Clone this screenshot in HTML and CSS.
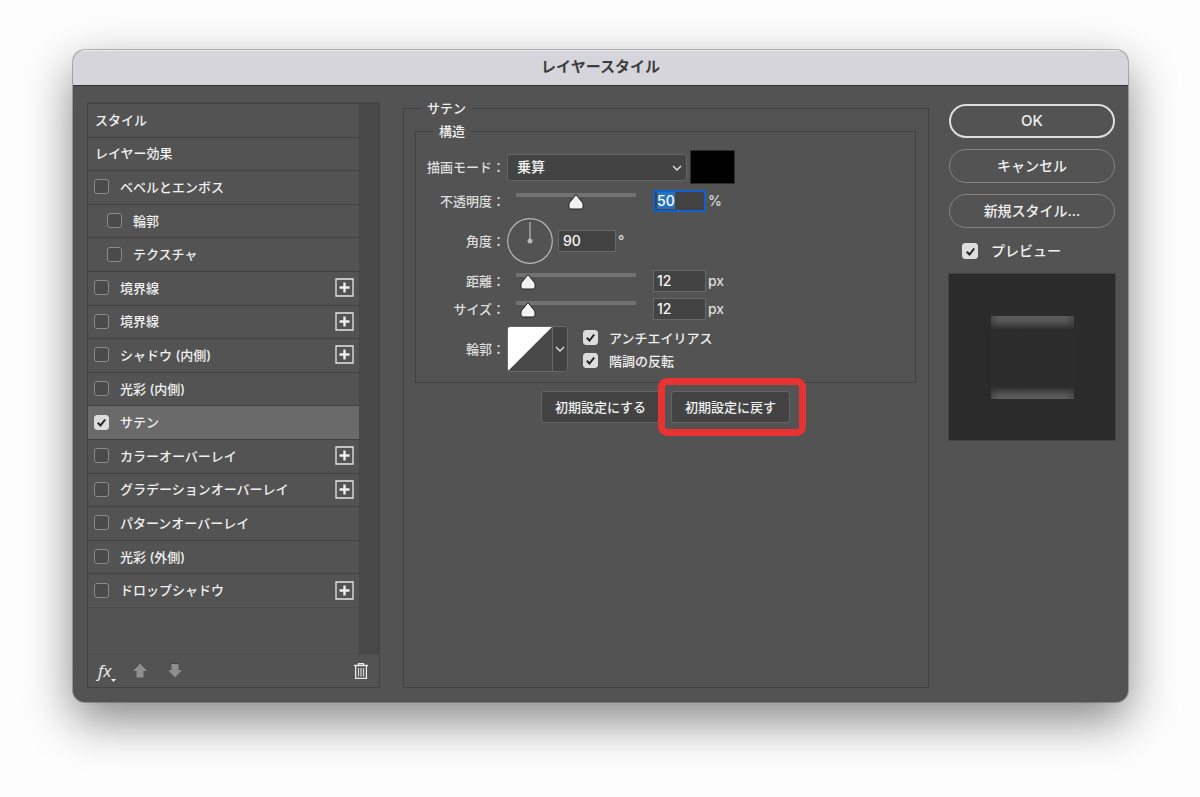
FILE: index.html
```html
<!DOCTYPE html>
<html lang="ja">
<head>
<meta charset="utf-8">
<title>レイヤースタイル</title>
<link rel="stylesheet" href="styles.css">
</head>
<body>
<svg class="defs" aria-hidden="true">
  <symbol id="plus" viewBox="0 0 19 19"><path d="M1 1h17v17H1z" fill="none" stroke="#e6e6e6" stroke-width="1.300"/><path d="M9.500 4.500v10M4.500 9.500h10" stroke="#efefef" stroke-width="2.400"/></symbol>
  <symbol id="chevron" viewBox="0 0 10 6"><path d="M1 1l4 4 4-4" fill="none" stroke="#e2e2e2" stroke-width="1.400"/></symbol>
</svg>
<main class="dialog" role="dialog" aria-labelledby="title">
  <h1 class="titlebar" id="title">レイヤースタイル</h1>
  <div class="content">
    <section class="sidebar">
      <div class="scroller">
        <ul class="effects">
          <li class="effect heading">スタイル</li>
          <li class="effect heading">レイヤー効果</li>
          <li class="effect"><label class="check"><input type="checkbox">ベベルとエンボス</label></li>
          <li class="effect sub"><label class="check"><input type="checkbox">輪郭</label></li>
          <li class="effect sub"><label class="check"><input type="checkbox">テクスチャ</label></li>
          <li class="effect"><label class="check"><input type="checkbox">境界線</label><button class="icon" aria-label="追加"><svg width="19" height="19"><use href="#plus"/></svg></button></li>
          <li class="effect"><label class="check"><input type="checkbox">境界線</label><button class="icon" aria-label="追加"><svg width="19" height="19"><use href="#plus"/></svg></button></li>
          <li class="effect"><label class="check"><input type="checkbox">シャドウ (内側)</label><button class="icon" aria-label="追加"><svg width="19" height="19"><use href="#plus"/></svg></button></li>
          <li class="effect"><label class="check"><input type="checkbox">光彩 (内側)</label></li>
          <li class="effect selected"><label class="check"><input type="checkbox" checked>サテン</label></li>
          <li class="effect"><label class="check"><input type="checkbox">カラーオーバーレイ</label><button class="icon" aria-label="追加"><svg width="19" height="19"><use href="#plus"/></svg></button></li>
          <li class="effect"><label class="check"><input type="checkbox">グラデーションオーバーレイ</label><button class="icon" aria-label="追加"><svg width="19" height="19"><use href="#plus"/></svg></button></li>
          <li class="effect"><label class="check"><input type="checkbox">パターンオーバーレイ</label></li>
          <li class="effect"><label class="check"><input type="checkbox">光彩 (外側)</label></li>
          <li class="effect last"><label class="check"><input type="checkbox">ドロップシャドウ</label><button class="icon" aria-label="追加"><svg width="19" height="19"><use href="#plus"/></svg></button></li>
        </ul>
      </div>
      <div class="toolbar">
        <button class="icon fx">fx<svg width="5" height="3" viewBox="0 0 5 3"><path d="M0 0h5L2.500 3z" fill="#eee"/></svg></button>
        <button class="icon" aria-label="上へ"><svg width="14" height="15" viewBox="0 0 14 15"><path d="M7 0L0 7.500h3" fill="none" stroke="#3e3e3e"/><path d="M7 0.500l7 7.500h-3.500v6.500h-7V8H0z" fill="#8f8f8f"/></svg></button>
        <button class="icon" aria-label="下へ"><svg width="14" height="15" viewBox="0 0 14 15"><path d="M3.500 0.500h7M0 7h3.500M10.500 7H14" stroke="#3e3e3e"/><path d="M7 14.500l7-7.500h-3.500V1h-7v6H0z" fill="#8f8f8f"/></svg></button>
        <button class="icon trash" aria-label="削除"><svg width="14" height="16" viewBox="0 0 14 16"><path d="M0 2.500h14M4.500 2.500V.600h5v1.900M1.600 3v12.300h10.800V3" fill="none" stroke="#e8e8e8" stroke-width="1.300"/><path d="M4.500 5v8.500M7 5v8.500M9.500 5v8.500" stroke="#d4d4d4" stroke-width="1.200"/></svg></button>
      </div>
    </section>

    <fieldset class="group outer">
      <legend>サテン</legend>
      <fieldset class="group">
        <legend>構造</legend>
        <div class="form">
          <label class="name" for="mode">描画モード：</label>
          <div class="row tall">
            <span class="select-wrap"><select id="mode"><option>乗算</option></select><svg class="arrow" width="10" height="6"><use href="#chevron"/></svg></span>
            <button class="swatch" aria-label="カラー"></button>
          </div>
          <label class="name" for="opacity">不透明度：</label>
          <div class="row">
            <input type="range" min="0" max="100" value="50" aria-label="不透明度">
            <input class="value" id="opacity" type="text" value="50"><span>%</span>
          </div>
          <label class="name" for="angle">角度：</label>
          <div class="row">
            <svg width="46" height="46" viewBox="0 0 46 46"><circle cx="23" cy="23" r="22.300" fill="none" stroke="#b9b9b9" stroke-width="1.200"/><path d="M23 4v19" stroke="#b9b9b9" stroke-width="1.200"/><circle cx="23" cy="23" r="2.500" fill="#b9b9b9"/></svg>
            <input class="value angle" id="angle" type="text" value="90"><span>°</span>
          </div>
          <label class="name" for="distance">距離：</label>
          <div class="row">
            <input type="range" min="0" max="120" value="12" aria-label="距離">
            <input class="value" id="distance" type="text" value="12"><span>px</span>
          </div>
          <label class="name" for="size">サイズ：</label>
          <div class="row">
            <input type="range" min="0" max="120" value="12" aria-label="サイズ">
            <input class="value" id="size" type="text" value="12"><span>px</span>
          </div>
          <label class="name" for="contour">輪郭：</label>
          <div class="row">
            <button class="contour" id="contour"><svg width="44" height="44" viewBox="0 0 44 44"><path d="M0 0h44L0 44z" fill="#fff"/></svg><span class="drop"><svg width="10" height="6"><use href="#chevron"/></svg></span></button>
            <div class="checks">
              <label class="check"><input type="checkbox" checked>アンチエイリアス</label>
              <label class="check"><input type="checkbox" checked>階調の反転</label>
            </div>
          </div>
        </div>
      </fieldset>
      <div class="defaults">
        <button class="push">初期設定にする</button>
        <span class="marked"><button class="push">初期設定に戻す</button></span>
      </div>
    </fieldset>

    <aside class="actions">
      <button class="pill primary">OK</button>
      <button class="pill">キャンセル</button>
      <button class="pill">新規スタイル...</button>
      <label class="check preview-check"><input type="checkbox" checked>プレビュー</label>
      <div class="preview"><div class="sample"></div></div>
    </aside>
  </div>
</main>
<script src="app.js"></script>
</body>
</html>
```
FILE: styles.css
```css
* { box-sizing: border-box; }

body {
  margin: 0;
  min-height: 100vh;
  padding: 50px 72px 95px 73px;
  display: flex;
  background: #fdfdfd;
  color: #f0f0f0;
  font: 500 13px/18px Inter, "Noto Sans CJK JP", sans-serif;
}

button, input, select { font: inherit; color: inherit; margin: 0; }
button { padding: 0; background: none; border: 0; }
svg { display: block; }
.defs { position: absolute; width: 0; height: 0; }

.dialog {
  flex: 1;
  min-width: 0;
  display: flex;
  flex-direction: column;
  overflow: clip;
  border-radius: 12px;
  background: #535353;
  box-shadow: 0 0 0 1px rgba(0, 0, 0, 0.25), 0 18px 48px rgba(0, 0, 0, 0.48);
}

.titlebar {
  margin: 0;
  padding: 6px 0 8px;
  background: #d6d5db;
  border-top: 1px solid #ececf0;
  border-bottom: 1px solid #333;
  color: #3c3c3e;
  font-size: 15px;
  line-height: 20px;
  font-weight: 700;
  text-align: center;
}

.content {
  flex: 1;
  display: grid;
  grid-template-columns: 293px 1fr 168px;
  padding: 12px 12px 14px 14px;
}

/* Effect list */
.sidebar {
  display: flex;
  flex-direction: column;
  margin-top: 4px;
  border: 1px solid #434343;
  border-top-width: 2px;
}

.scroller {
  flex: 1;
  display: flex;
  padding-right: 20px;
  background: linear-gradient(to left, #484848 20px, transparent 20px);
}

.effects {
  flex: 1;
  display: flex;
  flex-direction: column;
  margin: 0;
  padding: 0 0 46px;
  list-style: none;
}

.effect {
  flex: 1;
  display: flex;
  align-items: center;
  justify-content: space-between;
  padding: 0 5px 1px 6px;
  border-bottom: 1px solid #404040;
}
.effect.heading { padding-left: 7px; }
.effect.sub { padding-left: 19px; }
.effect.selected { background: #6a6a6a; }
.effect.last { border-color: #4d4d4d; }

.check { display: flex; align-items: center; gap: 11px; }

input[type="checkbox"] {
  appearance: none;
  width: 15px;
  height: 15px;
  border: 1px solid #8b8b8b;
  border-radius: 3px;
  background: #4a4a4a;
}
input[type="checkbox"]:checked {
  border-color: #dcdcdc;
  background: #dcdcdc url("data:image/svg+xml,%3Csvg xmlns='http://www.w3.org/2000/svg' viewBox='0 0 13 13'%3E%3Cpath d='M2.800 6.700l2.700 2.800 4.700-6' fill='none' stroke='%23222' stroke-width='2'/%3E%3C/svg%3E") center / 13px no-repeat;
}

.toolbar {
  display: flex;
  align-items: center;
  gap: 21px;
  height: 33px;
  padding: 0 11px 1px 10px;
  border-top: 1px solid #4d4d4d;
}
.fx {
  display: flex;
  align-items: flex-end;
  margin-right: -4px;
  font: italic 17px/22px "Open Sans", sans-serif;
}
.trash { margin-left: auto; }

/* Settings */
.group {
  min-width: 0;
  margin: 0;
  padding: 9px 11px 10px;
  border: 1px solid #414141;
}
.group legend { margin-left: 6px; padding: 0 6px; line-height: 20px; }
.group.outer { margin: 0 19px 0 23px; padding: 3px 12px 0 11px; }

.form {
  display: grid;
  grid-template-columns: 78px 1fr;
  gap: 6px 2px;
  align-items: center;
}
.name { text-align: right; white-space: nowrap; color: #dedede; }
.row { display: flex; align-items: center; color: #dedede; }
.row.tall { gap: 3px; }

.select-wrap { position: relative; display: flex; }
select {
  appearance: none;
  width: 180px;
  height: 27px;
  padding: 0 9px;
  border: 1px solid #666;
  border-radius: 3px;
  background: #434343;
  color: #f4f4f4;
}
.arrow { position: absolute; right: 5px; top: 11px; pointer-events: none; }
.swatch { width: 45px; height: 34px; background: #000; border: 1px solid #2e2e2e; }

input[type="range"] {
  appearance: none;
  width: 136px;
  height: 18px;
  margin: 0 9px 0 1px;
  background: linear-gradient(#727272, #727272) 8px 1px / 120px 4px no-repeat;
}
input[type="range"]::-webkit-slider-runnable-track { height: 18px; }
input[type="range"]::-webkit-slider-thumb {
  appearance: none;
  width: 16px;
  height: 16px;
  margin-top: 2px;
  background: url("data:image/svg+xml,%3Csvg xmlns='http://www.w3.org/2000/svg' viewBox='0 0 16 16'%3E%3Cpath d='M8 .700L14.800 9Q16 15 12.500 15h-9Q0 15 1.200 9z' fill='%23f2f2f2' stroke='%23222' stroke-linejoin='round'/%3E%3C/svg%3E") center / 16px no-repeat;
}

.value {
  width: 53px;
  height: 22px;
  margin-right: 2px;
  padding: 0 3px 1px;
  border: 1px solid #686868;
  border-radius: 0;
  background: #434343;
  color: #f6f6f6;
  font-size: 14px;
}
.value:focus { outline: 0; border: 1px solid #1260d0; box-shadow: inset 0 0 0 1px #1260d0; }
.value::selection { background: #2472c0; color: #fff; }
.value.angle { width: 58px; margin-left: 5px; padding-left: 4px; }
.row span { font-size: 14px; }

.contour {
  display: flex;
  width: 61px;
  height: 46px;
  border: 1px solid #686868;
  border-radius: 3px;
  overflow: hidden;
  background: #484848;
}
.drop {
  flex: 1;
  display: flex;
  align-items: center;
  justify-content: center;
  align-self: stretch;
  border-left: 1px solid #686868;
  background: #434343;
}
.checks { display: grid; gap: 5px; margin-left: 15px; color: #f0f0f0; }

.defaults { display: flex; justify-content: center; gap: 11px; margin-top: 8px; }
.push {
  display: block;
  height: 32px;
  padding: 0 13px 1px;
  border: 1px solid #646464;
  border-radius: 3px;
  background: #434343;
  white-space: nowrap;
}
.marked { position: relative; }
.marked::after {
  content: "";
  position: absolute;
  inset: -13px -16px -13px -13px;
  border: 7px solid #e73331;
  border-radius: 9px;
  pointer-events: none;
}

/* Actions */
.actions { display: flex; flex-direction: column; gap: 11px; padding-top: 6px; }
.pill {
  height: 34px;
  margin: 0 1px;
  padding-bottom: 1px;
  border: 1px solid #828282;
  border-radius: 17px;
  font-size: 14px;
}
.pill.primary { border: 2px solid #dedede; font-size: 15px; }
.preview-check { gap: 13px; margin: 2px 14px 0; font-size: 14px; line-height: 20px; }
.preview-check input[type="checkbox"] { width: 16px; height: 16px; }

.preview {
  display: grid;
  place-items: center;
  aspect-ratio: 1;
  margin-top: 1px;
  border: 1px solid #444;
  background: #2b2b2b;
}
.sample {
  width: 50%;
  aspect-ratio: 1;
  background:
    linear-gradient(to right, rgba(45, 45, 45, 0.4), transparent 8px calc(100% - 8px), rgba(45, 45, 45, 0.4)),
    linear-gradient(#5d5d5d, #525252 6px, #2c2c2c 14px calc(100% - 12px), #525252 calc(100% - 5px), #5d5d5d);
}
```
FILE: app.js
```js
const opacity = document.getElementById("opacity");
opacity.focus();
opacity.select();
```
